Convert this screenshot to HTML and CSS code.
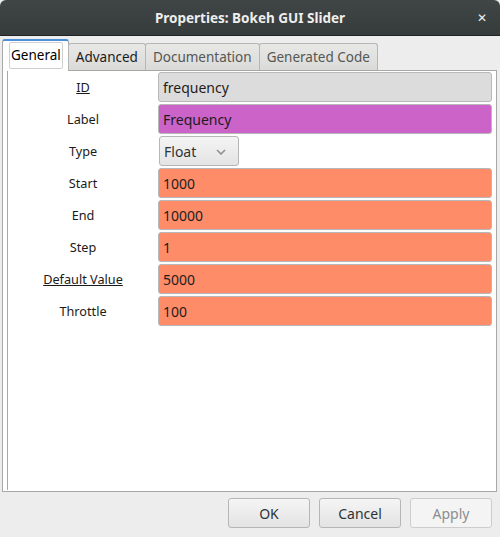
FILE: index.html
```html
<!DOCTYPE html>
<html>
<head>
<meta charset="utf-8">
<link rel="stylesheet" href="styles.css">
</head>
<body>
<div class="window">
  <div class="titlebar">
    <span class="title">Properties: Bokeh GUI Slider</span>
    <span class="close">&#x2715;</span>
  </div>
  <div class="tabs">
    <div class="tab active"><span class="focus">General</span></div>
    <div class="tab dark">Advanced</div>
    <div class="tab">Documentation</div>
    <div class="tab">Generated Code</div>
  </div>
  <div class="panel">
    <div class="scroll">
      <div class="form">
        <div class="lbl"><u>ID</u></div>
        <div class="field gray">frequency</div>
        <div class="lbl">Label</div>
        <div class="field magenta">Frequency</div>
        <div class="lbl">Type</div>
        <div class="combo-cell">
          <div class="combo">Float
            <svg class="chev" width="10" height="6" viewBox="0 0 10 6"><path d="M1 1 L5 5 L9 1" fill="none" stroke="#8a8e8e" stroke-width="1.5"/></svg>
          </div>
        </div>
        <div class="lbl">Start</div>
        <div class="field orange">1000</div>
        <div class="lbl">End</div>
        <div class="field orange">10000</div>
        <div class="lbl">Step</div>
        <div class="field orange">1</div>
        <div class="lbl"><u>Default Value</u></div>
        <div class="field orange">5000</div>
        <div class="lbl">Throttle</div>
        <div class="field orange">100</div>
      </div>
    </div>
  </div>
  <div class="buttons">
    <div class="btn">OK</div>
    <div class="btn">Cancel</div>
    <div class="btn disabled">Apply</div>
  </div>
</div>
</body>
</html>
```
FILE: styles.css
```css
html, body {
  margin: 0;
  padding: 0;
  background: #ededed;
}
body {
  font-family: "Noto Sans", "Open Sans", "DejaVu Sans", sans-serif;
  font-size: 13px;
  color: #2e3436;
}
.window {
  width: 500px;
  height: 537px;
  display: flex;
  flex-direction: column;
}
.titlebar {
  height: 35px;
  border-bottom: 1px solid #1f2323;
  background: linear-gradient(#404646, #363b3b);
  border-radius: 6px 6px 0 0;
  position: relative;
  display: flex;
  align-items: center;
  justify-content: center;
}
.title {
  color: #eeeeec;
  font-weight: bold;
  font-size: 13.5px;
}
.close {
  position: absolute;
  right: 13px;
  top: 9px;
  color: #eeeeec;
  font-weight: bold;
  font-size: 12px;
}
.tabs {
  height: 34px;
  display: flex;
  align-items: flex-end;
  padding-left: 2px;
  position: relative;
  z-index: 2;
  font-size: 13.5px;
}
.tab {
  height: 26px;
  border: 1px solid #b6b6b6;
  border-bottom: none;
  border-radius: 3px 3px 0 0;
  background: linear-gradient(#e8e8e7, #dadad9);
  padding: 0 7px;
  display: flex;
  align-items: center;
  color: #555753;
  margin-right: -1px;
}
.tab.dark {
  color: #1a1a1a;
}
.tab.active {
  background: #ffffff;
  border-color: #a8a8a8;
  border-top: 2px solid #4a90d9;
  margin-bottom: -1px;
  padding: 0 5px 1px 6px;
  color: #000;
  height: 29px;
}
.focus {
  border: 1px solid #cfcfcf;
  border-radius: 2px;
  padding: 3px 1px 4px 1px;
  background: #fff;
}
.panel {
  margin: 0 3px 0 2px;
  height: 420px;
  border: 1px solid #a8a8a8;
  background: #ffffff;
  padding: 0 4px 0 4px;
}
.scroll {
  height: 419px;
  border-left: 1px solid #a8a8a8;
}
.form {
  display: grid;
  grid-template-columns: 150px 334px;
  grid-auto-rows: 30px;
  row-gap: 2px;
  padding-top: 1px;
}
.lbl {
  display: flex;
  align-items: center;
  justify-content: center;
  color: #1a1a1a;
  font-size: 12.7px;
}
.field {
  box-sizing: border-box;
  height: 30px;
  border: 1px solid #b8b8b8;
  border-radius: 3px;
  padding-left: 4px;
  display: flex;
  align-items: center;
  color: #1c1c1c;
  font-size: 14px;
}
.gray { background: #dcdcdc; }
.magenta { background: #cb63c9; }
.orange { background: #ff8c68; }
.combo-cell {
  display: flex;
  padding-left: 1px;
}
.combo {
  box-sizing: border-box;
  width: 80px;
  height: 30px;
  border: 1px solid #b6b6b6;
  border-radius: 3px;
  background: linear-gradient(#f4f4f4, #e4e4e4);
  display: flex;
  align-items: center;
  padding-left: 4px;
  font-size: 14px;
  color: #2e3436;
  position: relative;
}
.chev {
  position: absolute;
  right: 12px;
  top: 12px;
}
.buttons {
  display: flex;
  justify-content: flex-end;
  gap: 9px;
  padding: 6px 8px 0 0;
}
.btn {
  box-sizing: border-box;
  width: 82px;
  height: 30px;
  border: 1px solid #b6b6b6;
  border-radius: 3px;
  background: linear-gradient(#f5f5f5, #e3e3e3);
  display: flex;
  align-items: center;
  justify-content: center;
  font-size: 14px;
  color: #2e3436;
}
.btn.disabled {
  background: #f4f4f4;
  border-color: #cdcdcd;
  color: #8b8e8f;
}
```
